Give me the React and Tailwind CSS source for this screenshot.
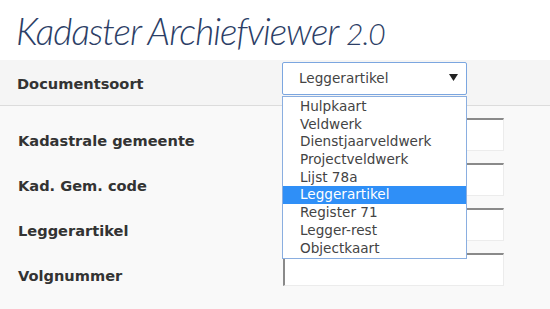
export default function App() {
  const items = [
    "Hulpkaart",
    "Veldwerk",
    "Dienstjaarveldwerk",
    "Projectveldwerk",
    "Lijst 78a",
    "Leggerartikel",
    "Register 71",
    "Legger-rest",
    "Objectkaart",
  ];
  const rows = ["Kadastrale gemeente", "Kad. Gem. code", "Leggerartikel", "Volgnummer"];
  const body = { fontFamily: '"DejaVu Sans", Verdana, sans-serif' };
  return (
    <div className="w-[550px] h-[309px] bg-[#f9f9f9] overflow-hidden flex flex-col" style={body}>
      <div className="h-[60px] bg-white flex items-start pl-[16px] pt-[10px]">
        <h1
          className="text-[37px] leading-[42px] italic font-light text-[#2c3e66] tracking-[-1px]"
          style={{ fontFamily: 'Lato, "Open Sans", sans-serif' }}
        >
          Kadaster Archiefviewer <span className="text-[30px]">2.0</span>
        </h1>
      </div>
      <div className="h-[46px] bg-[#f5f5f5] border-b border-[#dcdcdc] flex items-start">
        <div className="w-[282px] pl-[17px] pt-[13px] text-[14.6px] font-bold text-[#333]">Documentsoort</div>
        <div className="relative mt-[2px]">
          <div className="w-[185px] h-[33px] bg-white border border-[#7ba6e0] rounded-[2px] flex items-center pl-[16px] pr-[8px] text-[13.6px] text-[#444]">
            <span className="flex-1">Leggerartikel</span>
            <svg width="9" height="7" viewBox="0 0 9 7" className="mb-[2px]">
              <path d="M0 0 H9 L4.5 7 Z" fill="#222" />
            </svg>
          </div>
          <div className="absolute left-0 top-[34px] w-[185px] bg-white border border-[#8aaee0] z-10 py-[1px]">
            {items.map((it) => (
              <div
                key={it}
                className={
                  "h-[17.7px] leading-[17.7px] pl-[17px] text-[13.6px] " +
                  (it === "Leggerartikel" ? "bg-[#2f8ff7] text-white" : "text-[#444]")
                }
              >
                {it}
              </div>
            ))}
          </div>
        </div>
      </div>
      <div className="flex flex-col pt-[12px]">
        {rows.map((r) => (
          <div key={r} className="h-[45px] flex items-start">
            <div className="w-[283px] pl-[18px] pt-[12px] text-[14.6px] font-bold text-[#333]">{r}</div>
            <div className="w-[221px] h-[33px] bg-white border-t-2 border-l-2 border-t-[#8a8a8a] border-l-[#8a8a8a] border-r border-b border-r-[#ececec] border-b-[#ececec]" />
          </div>
        ))}
      </div>
    </div>
  );
}
